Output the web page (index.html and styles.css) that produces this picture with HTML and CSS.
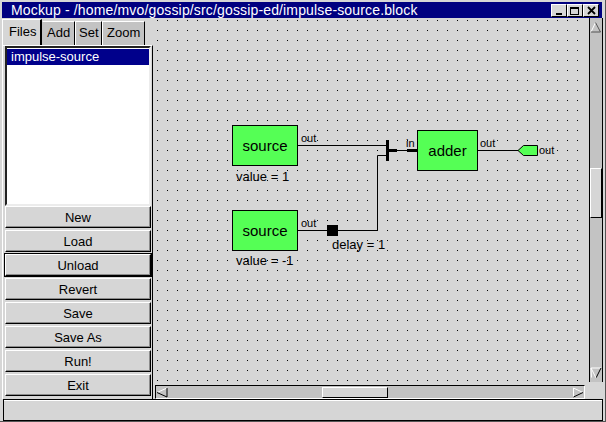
FILE: index.html
```html
<!DOCTYPE html>
<html>
<head>
<meta charset="utf-8">
<title>Mockup</title>
<link rel="stylesheet" href="styles.css">
</head>
<body>
<div class="window">
  <div class="titlebar">
    <span class="title">Mockup - /home/mvo/gossip/src/gossip-ed/impulse-source.block</span>
    <div class="wbtns">
      <span class="wbtn"><svg width="14" height="11" viewBox="0 0 14 11"><rect x="4" y="8" width="6" height="2" fill="#000"/></svg></span>
      <span class="wbtn"><svg width="14" height="11" viewBox="0 0 14 11"><rect x="2.5" y="2.5" width="8" height="7" fill="none" stroke="#000"/><rect x="2" y="2" width="9" height="2" fill="#000"/></svg></span>
      <span class="wbtn"><svg width="14" height="11" viewBox="0 0 14 11"><path d="M4 2 L11 9 M11 2 L4 9" stroke="#000" stroke-width="1.8" fill="none"/></svg></span>
    </div>
  </div>
  <div class="main">
    <div class="side">
      <div class="tabs">
        <span class="tab active tab-files">Files</span>
        <span class="tab tab-add">Add</span>
        <span class="tab tab-set">Set</span>
        <span class="tab tab-zoom">Zoom</span>
      </div>
      <div class="page">
        <div class="list">
          <div class="item selected">impulse-source</div>
        </div>
        <div class="buttons">
          <button class="btn">New</button>
          <button class="btn">Load</button>
          <button class="btn default">Unload</button>
          <button class="btn">Revert</button>
          <button class="btn">Save</button>
          <button class="btn">Save As</button>
          <button class="btn">Run!</button>
          <button class="btn">Exit</button>
        </div>
      </div>
    </div>
    <div class="view">
      <div class="canvas">
        <svg class="diagram" width="433" height="366" viewBox="155 18 433 366">
          <defs>
            <pattern id="dots" x="157" y="20" width="10" height="10" patternUnits="userSpaceOnUse">
              <rect width="1" height="1" fill="#000"/>
            </pattern>
          </defs>
          <rect x="155" y="18" width="431" height="366" fill="url(#dots)"/>
          <g stroke="#000" stroke-width="1" fill="none">
            <line x1="298" y1="145.5" x2="386" y2="145.5"/>
            <line x1="397" y1="150.5" x2="407" y2="150.5"/>
            <line x1="478" y1="150.5" x2="518" y2="150.5"/>
            <line x1="298" y1="230.5" x2="327" y2="230.5"/>
            <polyline points="338,230.5 377.5,230.5 377.5,155.5 386,155.5"/>
          </g>
          <rect x="386" y="140" width="3" height="21" fill="#000"/>
          <rect x="389" y="149" width="8" height="3" fill="#000"/>
          <rect x="407" y="149" width="10" height="3" fill="#000"/>
          <rect x="327" y="225" width="11" height="11" fill="#000"/>
          <g fill="#55ff55" stroke="#000" stroke-width="1">
            <rect x="232.5" y="125.5" width="65" height="40"/>
            <rect x="232.5" y="210.5" width="65" height="40"/>
            <rect x="417.5" y="130.5" width="60" height="40"/>
            <polygon points="518,150.5 523.5,145.5 537.5,145.5 537.5,155.5 523.5,155.5"/>
          </g>
          <g class="lbl-big" text-anchor="middle">
            <text x="265" y="151">source</text>
            <text x="265" y="236">source</text>
            <text x="447.5" y="156">adder</text>
          </g>
          <g class="lbl-small">
            <text x="301" y="142">out</text>
            <text x="301" y="227">out</text>
            <text x="406" y="146.5">in</text>
            <text x="480" y="147">out</text>
            <text x="539" y="154">out</text>
          </g>
          <g class="lbl-mid">
            <text x="236" y="181">value = 1</text>
            <text x="236" y="265">value = -1</text>
            <text x="332" y="249">delay = 1</text>
          </g>
        </svg>
      </div>
      <div class="vscroll">
        <svg class="arrow" width="12" height="12" viewBox="0 0 12 12"><path d="M1 11 L5.5 1.5" stroke="#fff" fill="none"/><path d="M5.5 1.5 L10.5 11 L1 11" stroke="#555" fill="none"/></svg>
        <div class="vthumb"></div>
        <div class="spacer"></div>
        <svg class="arrow" width="12" height="12" viewBox="0 0 12 12"><path d="M1.5 10.5 L1 1 L11 1" stroke="#fff" fill="none"/><path d="M11 1 L6 11" stroke="#000" fill="none"/><path d="M1 1 L6 11" stroke="#fff" fill="none"/></svg>
      </div>
      <div class="hscroll">
        <svg class="arrow" width="12" height="11" viewBox="0 0 12 11"><path d="M1 5.5 L11 1" stroke="#fff" fill="none"/><path d="M1 5.5 L11 10 L11 1" stroke="#000" fill="none"/></svg>
        <div class="hthumb"></div>
        <div class="spacer"></div>
        <svg class="arrow" width="12" height="11" viewBox="0 0 12 11"><path d="M1.5 10 L1.5 1 L11 5.5" stroke="#fff" fill="none"/><path d="M11 5.5 L1.5 10" stroke="#000" fill="none"/></svg>
      </div>
      <div class="corner"></div>
    </div>
  </div>
  <div class="status"></div>
</div>
</body>
</html>
```

FILE: styles.css
```css
* {
  box-sizing: border-box;
  margin: 0;
  padding: 0;
}

html, body {
  width: 606px;
  height: 422px;
  overflow: hidden;
}

body {
  background: #d6d6d6;
  font-family: "Liberation Sans", Arial, Helvetica, sans-serif;
  color: #000;
}

.window {
  width: 606px;
  height: 422px;
  padding: 2px 3px 1px 2px;
  display: grid;
  grid-template-rows: 16px 381px 22px;
  box-shadow: inset -1px -1px #555;
}

/* title bar */
.titlebar {
  background: #000080;
  color: #fff;
  display: flex;
  align-items: flex-start;
  height: 16px;
  overflow: hidden;
  margin-right: 1px;
}

.title {
  flex: 1;
  font-size: 14px;
  line-height: 17px;
  letter-spacing: 0.15px;
  padding-left: 9px;
  white-space: nowrap;
}

.wbtns {
  display: flex;
  margin-top: 2px;
  margin-right: 3px;
}

.wbtn {
  width: 16px;
  height: 13px;
  background: #d6d6d6;
  border: 1px solid;
  border-color: #fff #000 #000 #fff;
  display: flex;
}

.wbtn svg {
  display: block;
}

/* main area */
.main {
  display: grid;
  grid-template-columns: 153px 448px;
}

.side {
  display: flex;
  flex-direction: column;
  padding-right: 2px;
}

.tabs {
  display: flex;
  align-items: flex-end;
  height: 27px;
}

.tab {
  font-size: 13px;
  background: #c3c3c3;
  height: 24px;
  line-height: 22px;
  border-top: 1px solid #fff;
  border-left: 1px solid #fff;
  border-right: 1px solid #000;
  white-space: nowrap;
}

.tab.active {
  background: #d6d6d6;
  height: 26px;
  line-height: 24px;
  border-right-width: 2px;
}

.tab-files { width: 40px; padding-left: 6px; }
.tab-add { width: 33px; padding-left: 4px; border-left-color: #c3c3c3; }
.tab-set { width: 27px; padding-left: 3px; }
.tab-zoom { width: 43px; padding-left: 4px; }

.page {
  flex: 1;
  border-top: 1px solid #fff;
  border-left: 1px solid #fff;
  border-right: 1px solid #000;
  padding: 0 1px 0 2px;
}

.list {
  height: 160px;
  background: #fff;
  border: 2px solid;
  border-color: #222 #ececec #ececec #222;
  padding-top: 1px;
}

.item {
  height: 16px;
  line-height: 16px;
  font-size: 13px;
  padding-left: 4px;
  white-space: nowrap;
}

.item.selected {
  background: #00008b;
  color: #fff;
}

.buttons {
  display: flex;
  flex-direction: column;
  gap: 2px;
}

.btn {
  display: block;
  width: 100%;
  height: 22px;
  font-family: "Liberation Sans", Arial, Helvetica, sans-serif;
  font-size: 13px;
  line-height: 19px;
  color: #000;
  background: #d6d6d6;
  border: 1px solid;
  border-color: #fff #000 #000 #fff;
  box-shadow: inset -1px -1px #8c8c8c;
  text-align: center;
}

.btn.default {
  outline: 1px solid #000;
}

/* drawing view */
.view {
  display: grid;
  grid-template-columns: 433px 15px;
  grid-template-rows: 366px 15px;
}

.canvas {
  overflow: hidden;
}

.diagram {
  display: block;
}

.lbl-big {
  font-family: "Liberation Sans", Arial, sans-serif;
  font-size: 15px;
  fill: #000;
}

.lbl-mid {
  font-family: "Liberation Sans", Arial, sans-serif;
  font-size: 13px;
  fill: #000;
}

.lbl-small {
  font-family: "Liberation Sans", Arial, sans-serif;
  font-size: 11px;
  fill: #000;
}

.arrow {
  display: block;
  flex: none;
}

.vscroll {
  margin: 0 0 2px 1px;
  background: #c3c3c3;
  border-left: 1px solid #000;
  border-right: 1px solid #000;
  display: flex;
  flex-direction: column;
  padding: 3px 0;
}

.vthumb {
  margin-top: 135px;
  height: 50px;
  flex: none;
  background: #d6d6d6;
  border: 1px solid;
  border-color: #fff #000 #000 #fff;
}

.spacer {
  flex: 1;
}

.hscroll {
  margin: 1px 3px 0 0;
  height: 14px;
  background: #c3c3c3;
  border: 1px solid;
  border-color: #000 #fff #fff #000;
  display: flex;
  align-items: center;
}

.hthumb {
  margin-left: 154px;
  width: 66px;
  height: 11px;
  flex: none;
  background: #d6d6d6;
  border: 1px solid;
  border-color: #fff #000 #000 #fff;
}

.corner {
  background: #d6d6d6;
}

/* status bar */
.status {
  margin-left: 1px;
  border: 1px solid #000;
  box-shadow: inset 0 1px #fff;
}
```
